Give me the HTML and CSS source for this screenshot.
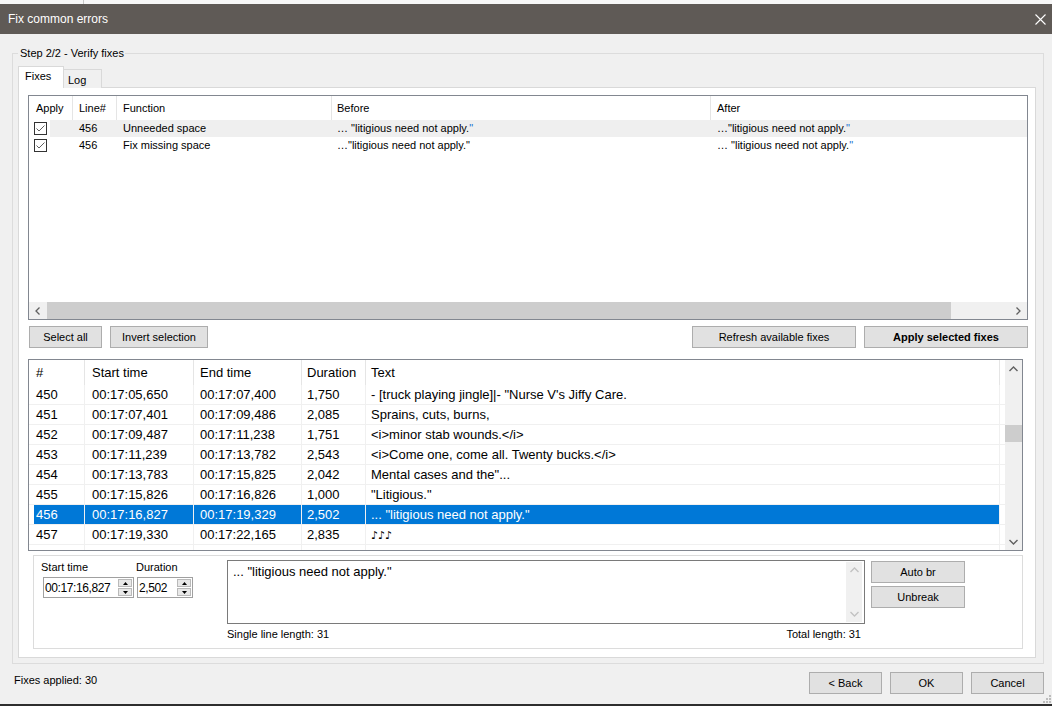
FILE: index.html
```html
<!DOCTYPE html>
<html lang="en">
<head>
    <meta charset="UTF-8">
    <title>Fix common errors</title>
    <link rel="stylesheet" href="styles.css">
</head>
<body>

    <div class="top-strip"><div class="top-strip-mark"></div></div>

    <div class="titlebar">
        <span>Fix common errors</span>
        <svg class="close" width="11" height="11" viewBox="0 0 11 11">
            <path d="M0.5 0.5L10.5 10.5M10.5 0.5L0.5 10.5" stroke="#fff" stroke-width="1.1" fill="none"/>
        </svg>
    </div>

    <div class="group">
        <div class="group-title">Step 2/2 - Verify fixes</div>

        <div class="tabs">
            <div class="tab active">Fixes</div>
            <div class="tab">Log</div>
        </div>

        <div class="tab-page">
            <!-- list of fixes found -->
            <div class="fix-list">
                <div class="fl-head">
                    <div class="c-apply">Apply</div>
                    <div class="c-line">Line#</div>
                    <div class="c-func">Function</div>
                    <div class="c-before">Before</div>
                    <div class="c-after">After</div>
                </div>
                <div class="fl-row hot">
                    <div class="c-apply">
                        <svg class="check" width="13" height="13" viewBox="0 0 13 13">
                            <rect x="0.5" y="0.5" width="12" height="12" fill="#fff" stroke="#333"/>
                            <path d="M2.5 6.5L5 9L10.5 3.5" stroke="#606060" stroke-width="1" fill="none"/>
                        </svg>
                    </div>
                    <div class="c-line">456</div>
                    <div class="c-func">Unneeded space</div>
                    <div class="c-before">… "litigious need not apply.<span class="diff">"</span></div>
                    <div class="c-after">…"litigious need not apply.<span class="diff">"</span></div>
                </div>
                <div class="fl-row">
                    <div class="c-apply">
                        <svg class="check" width="13" height="13" viewBox="0 0 13 13">
                            <rect x="0.5" y="0.5" width="12" height="12" fill="#fff" stroke="#333"/>
                            <path d="M2.5 6.5L5 9L10.5 3.5" stroke="#606060" stroke-width="1" fill="none"/>
                        </svg>
                    </div>
                    <div class="c-line">456</div>
                    <div class="c-func">Fix missing space</div>
                    <div class="c-before">…"litigious need not apply."</div>
                    <div class="c-after">… "litigious need not apply.<span class="diff">"</span></div>
                </div>
                <div class="fl-fill"></div>
                <div class="hscroll">
                    <div class="sb-btn">
                        <svg width="6" height="8" viewBox="0 0 6 8"><path d="M4.5 0.5L1 4L4.5 7.5" stroke="#606060" stroke-width="1.3" fill="none"/></svg>
                    </div>
                    <div class="h-thumb"></div>
                    <div class="sb-track"></div>
                    <div class="sb-btn">
                        <svg width="6" height="8" viewBox="0 0 6 8"><path d="M1.5 0.5L5 4L1.5 7.5" stroke="#606060" stroke-width="1.3" fill="none"/></svg>
                    </div>
                </div>
            </div>

            <div class="btn-row">
                <div class="btn w-select">Select all</div>
                <div class="btn w-invert">Invert selection</div>
                <div class="btn w-refresh">Refresh available fixes</div>
                <div class="btn w-apply">Apply selected fixes</div>
            </div>

            <!-- subtitle preview -->
            <div class="sub-grid">
                <div class="sg-main">
                    <div class="sg-head">
                        <div class="g-num">#</div>
                        <div class="g-start">Start time</div>
                        <div class="g-end">End time</div>
                        <div class="g-dur">Duration</div>
                        <div class="g-text">Text</div>
                        <div class="g-fill"></div>
                    </div>
                    <div class="sg-row">
                        <div class="g-num">450</div>
                        <div class="g-start">00:17:05,650</div>
                        <div class="g-end">00:17:07,400</div>
                        <div class="g-dur">1,750</div>
                        <div class="g-text">- [truck playing jingle]|- "Nurse V's Jiffy Care.</div>
                        <div class="g-fill"></div>
                    </div>
                    <div class="sg-row">
                        <div class="g-num">451</div>
                        <div class="g-start">00:17:07,401</div>
                        <div class="g-end">00:17:09,486</div>
                        <div class="g-dur">2,085</div>
                        <div class="g-text">Sprains, cuts, burns,</div>
                        <div class="g-fill"></div>
                    </div>
                    <div class="sg-row">
                        <div class="g-num">452</div>
                        <div class="g-start">00:17:09,487</div>
                        <div class="g-end">00:17:11,238</div>
                        <div class="g-dur">1,751</div>
                        <div class="g-text">&lt;i&gt;minor stab wounds.&lt;/i&gt;</div>
                        <div class="g-fill"></div>
                    </div>
                    <div class="sg-row">
                        <div class="g-num">453</div>
                        <div class="g-start">00:17:11,239</div>
                        <div class="g-end">00:17:13,782</div>
                        <div class="g-dur">2,543</div>
                        <div class="g-text">&lt;i&gt;Come one, come all. Twenty bucks.&lt;/i&gt;</div>
                        <div class="g-fill"></div>
                    </div>
                    <div class="sg-row">
                        <div class="g-num">454</div>
                        <div class="g-start">00:17:13,783</div>
                        <div class="g-end">00:17:15,825</div>
                        <div class="g-dur">2,042</div>
                        <div class="g-text">Mental cases and the"...</div>
                        <div class="g-fill"></div>
                    </div>
                    <div class="sg-row">
                        <div class="g-num">455</div>
                        <div class="g-start">00:17:15,826</div>
                        <div class="g-end">00:17:16,826</div>
                        <div class="g-dur">1,000</div>
                        <div class="g-text">"Litigious."</div>
                        <div class="g-fill"></div>
                    </div>
                    <div class="sg-row sel">
                        <div class="g-num">456</div>
                        <div class="g-start">00:17:16,827</div>
                        <div class="g-end">00:17:19,329</div>
                        <div class="g-dur">2,502</div>
                        <div class="g-text">... "litigious need not apply."</div>
                        <div class="g-fill"></div>
                    </div>
                    <div class="sg-row">
                        <div class="g-num">457</div>
                        <div class="g-start">00:17:19,330</div>
                        <div class="g-end">00:17:22,165</div>
                        <div class="g-dur">2,835</div>
                        <div class="g-text"><span class="notes">♪♪♪</span></div>
                        <div class="g-fill"></div>
                    </div>
                    <div class="sg-row">
                        <div class="g-num"></div>
                        <div class="g-start"></div>
                        <div class="g-end"></div>
                        <div class="g-dur"></div>
                        <div class="g-text"></div>
                        <div class="g-fill"></div>
                    </div>
                </div>
                <div class="vscroll">
                    <div class="sb-btn-v">
                        <svg width="9" height="6" viewBox="0 0 9 6"><path d="M0.5 5L4.5 1L8.5 5" stroke="#606060" stroke-width="1.4" fill="none"/></svg>
                    </div>
                    <div class="v-thumb"></div>
                    <div class="sb-track"></div>
                    <div class="sb-btn-v">
                        <svg width="9" height="6" viewBox="0 0 9 6"><path d="M0.5 1L4.5 5L8.5 1" stroke="#606060" stroke-width="1.4" fill="none"/></svg>
                    </div>
                </div>
            </div>

            <!-- edit area for the selected line -->
            <div class="edit-box">
                <div class="field f-start">
                    <div class="field-label">Start time</div>
                    <div class="spin-input w-time">
                        <span class="spin-value">00:17:16,827</span>
                        <div class="spinner">
                            <div class="spin-half"><svg width="5" height="3" viewBox="0 0 5 3"><path d="M0 3L2.5 0L5 3Z" fill="#000"/></svg></div>
                            <div class="spin-half"><svg width="5" height="3" viewBox="0 0 5 3"><path d="M0 0L2.5 3L5 0Z" fill="#000"/></svg></div>
                        </div>
                    </div>
                </div>
                <div class="field f-dur">
                    <div class="field-label">Duration</div>
                    <div class="spin-input w-dur">
                        <span class="spin-value">2,502</span>
                        <div class="spinner">
                            <div class="spin-half"><svg width="5" height="3" viewBox="0 0 5 3"><path d="M0 3L2.5 0L5 3Z" fill="#000"/></svg></div>
                            <div class="spin-half"><svg width="5" height="3" viewBox="0 0 5 3"><path d="M0 0L2.5 3L5 0Z" fill="#000"/></svg></div>
                        </div>
                    </div>
                </div>
                <div class="text-col">
                    <div class="memo">
                        <div class="memo-text">... "litigious need not apply."</div>
                        <div class="memo-scroll">
                            <svg width="9" height="6" viewBox="0 0 9 6"><path d="M0.5 5L4.5 1L8.5 5" stroke="#c2c2c2" stroke-width="1.3" fill="none"/></svg>
                            <svg width="9" height="6" viewBox="0 0 9 6"><path d="M0.5 1L4.5 5L8.5 1" stroke="#c2c2c2" stroke-width="1.3" fill="none"/></svg>
                        </div>
                    </div>
                    <div class="len-row">
                        <span>Single line length: 31</span>
                        <span>Total length: 31</span>
                    </div>
                </div>
                <div class="side-btns">
                    <div class="btn w-side">Auto br</div>
                    <div class="btn w-side">Unbreak</div>
                </div>
            </div>
        </div>
    </div>

    <div class="footer">
        <div class="footer-text">Fixes applied: 30</div>
        <div class="btn w-foot">&lt; Back</div>
        <div class="btn w-foot">OK</div>
        <div class="btn w-foot">Cancel</div>
    </div>

    <div class="spacer"></div>
    <div class="bottom-strip"></div>

    <svg class="grip" width="8" height="8" viewBox="0 0 8 8">
        <rect x="6" y="0" width="2" height="2" fill="#bcbcbc"/>
        <rect x="3" y="3" width="2" height="2" fill="#bcbcbc"/>
        <rect x="6" y="3" width="2" height="2" fill="#bcbcbc"/>
        <rect x="0" y="6" width="2" height="2" fill="#bcbcbc"/>
        <rect x="3" y="6" width="2" height="2" fill="#bcbcbc"/>
        <rect x="6" y="6" width="2" height="2" fill="#bcbcbc"/>
    </svg>

</body>
</html>
```

FILE: styles.css
```css
* {
    box-sizing: border-box;
}

body {
    margin: 0;
    width: 1052px;
    height: 706px;
    overflow: hidden;
    position: relative;
    display: flex;
    flex-direction: column;
    background-color: #f0f0f0;
    font-family: "Liberation Sans", Arial, sans-serif;
    font-size: 11px;
    color: #000;
}

.top-strip {
    height: 4px;
    flex: none;
    background-color: #f7f7f7;
}

.top-strip-mark {
    width: 84px;
    height: 4px;
    border-right: 1px solid #c8c8c8;
}

.titlebar {
    height: 30px;
    flex: none;
    display: flex;
    align-items: center;
    justify-content: space-between;
    padding: 0 6px 0 8px;
    background-color: #5f5a56;
    color: #fff;
    font-size: 12px;
}

/* group box */
.group {
    width: 1032px;
    height: 611px;
    flex: none;
    margin: 19px 0 0 12px;
    padding: 0 7px 0 5px;
    border: 1px solid #dcdcdc;
}

.group-title {
    display: table;
    margin-top: -8px;
    padding: 0 1px 0 2px;
    line-height: 15px;
    background-color: #f0f0f0;
}

.tabs {
    display: flex;
    align-items: flex-end;
    height: 22px;
    margin-top: 5px;
    margin-bottom: -1px;
    position: relative;
    z-index: 1;
}

.tab {
    width: 38px;
    height: 19px;
    padding-left: 4px;
    line-height: 20px;
    background-color: #f0f0f0;
    border: 1px solid #d9d9d9;
    border-left: none;
    border-bottom: none;
}

.tab.active {
    width: 46px;
    height: 22px;
    padding-left: 6px;
    line-height: 18px;
    background-color: #fff;
    border-left: 1px solid #d9d9d9;
}

.tab-page {
    height: 571px;
    padding: 7px 7px 0 9px;
    background-color: #fff;
    border: 1px solid #d9d9d9;
}

/* fixes list view */
.fix-list {
    width: 1000px;
    height: 225px;
    display: flex;
    flex-direction: column;
    background-color: #fff;
    border: 1px solid #828790;
}

.fl-head,
.fl-row {
    display: flex;
    flex: none;
    white-space: nowrap;
}

.fl-head {
    height: 24px;
    line-height: 24px;
}

.fl-head > div {
    border-right: 1px solid #e5e5e5;
}

.fl-head .c-after {
    border-right: none;
}

.fl-row {
    height: 17px;
    line-height: 17px;
}

.fl-row.hot {
    background: linear-gradient(to right, transparent 21px, #efefef 21px);
}

.c-apply { width: 44px; padding-left: 7px; }
.c-line { width: 44px; padding-left: 6px; }
.c-func { width: 215px; padding-left: 6px; }
.c-before { width: 379px; padding-left: 5px; }
.c-after { flex: 1; padding-left: 6px; }

.fl-row .c-apply {
    padding-left: 5px;
}

.check {
    display: block;
    margin-top: 2px;
}

.diff {
    color: #1a73d1;
}

.fl-fill {
    flex: 1;
}

.hscroll {
    height: 17px;
    flex: none;
    display: flex;
    background-color: #f0f0f0;
}

.sb-btn {
    width: 18px;
    display: flex;
    align-items: center;
    justify-content: center;
}

.h-thumb {
    width: 904px;
    background-color: #cdcdcd;
}

.sb-track {
    flex: 1;
}

/* buttons */
.btn {
    height: 22px;
    display: flex;
    align-items: center;
    justify-content: center;
    background-color: #e1e1e1;
    border: 1px solid #adadad;
    white-space: nowrap;
}

.btn-row {
    display: flex;
    height: 22px;
    margin-top: 6px;
    padding-left: 1px;
}

.w-select { width: 73px; }
.w-invert { width: 98px; margin-left: 8px; }
.w-refresh { width: 164px; margin-left: auto; }
.w-apply { width: 164px; margin-left: 8px; font-weight: bold; }

/* subtitle grid */
.sub-grid {
    width: 995px;
    height: 192px;
    margin-top: 11px;
    display: flex;
    background-color: #fff;
    border: 1px solid #828790;
    font-size: 13px;
}

.sg-main {
    flex: 1;
    overflow: hidden;
}

.sg-head,
.sg-row {
    display: flex;
    white-space: nowrap;
}

.sg-head {
    height: 25px;
    line-height: 25px;
}

.sg-head > div {
    border-right: 1px solid #e5e5e5;
}

.sg-row {
    height: 20px;
    line-height: 20px;
    border-bottom: 1px solid #f0f0f0;
}

.sg-row > div {
    border-right: 1px solid #f0f0f0;
}

.g-num { width: 56px; padding-left: 7px; }
.g-start { width: 109px; padding-left: 7px; }
.g-end { width: 108px; padding-left: 6px; }
.g-dur { width: 64px; padding-left: 5px; }
.g-text { width: 634px; padding-left: 5px; overflow: hidden; }

.sg-head .g-fill,
.sg-row .g-fill {
    flex: 1;
    border-right: none;
}

.sg-row.sel > div {
    background-color: #0078d7;
    color: #fff;
}

.sg-row.sel .g-num {
    background: linear-gradient(to right, #fff 5px, #0078d7 5px);
}

.sg-row.sel .g-fill {
    background-color: #fff;
}

.notes {
    font-family: "DejaVu Sans", sans-serif;
    font-size: 11px;
}

.vscroll {
    width: 17px;
    display: flex;
    flex-direction: column;
    background-color: #f0f0f0;
}

.sb-btn-v {
    height: 17px;
    display: flex;
    align-items: center;
    justify-content: center;
}

.v-thumb {
    height: 17px;
    margin-top: 48px;
    background-color: #cdcdcd;
}

/* edit box */
.edit-box {
    width: 990px;
    height: 94px;
    margin: 4px 0 0 5px;
    padding: 4px 0 0 7px;
    display: flex;
    background-color: #fff;
    border: 1px solid #dcdcdc;
}

.field-label {
    line-height: 14px;
}

.f-start { width: 93px; }
.f-dur { width: 57px; margin-left: 2px; }

.spin-input {
    height: 21px;
    margin-top: 3px;
    display: flex;
    align-items: center;
    justify-content: space-between;
    border: 1px solid #a0a0a0;
    background-color: #fff;
    padding: 0 1px 0 1px;
}

.w-time { width: 91px; margin-left: 2px; }
.w-dur { width: 56px; margin-left: 1px; }

.spin-value {
    font-size: 12px;
    letter-spacing: -0.4px;
}

.spinner {
    width: 14px;
    height: 17px;
    display: flex;
    flex-direction: column;
    gap: 1px;
}

.spin-half {
    flex: 1;
    display: flex;
    align-items: center;
    justify-content: center;
    background-color: #e8e8e8;
    border: 1px solid #b9b9b9;
}

.spin-half svg {
    display: block;
}

.text-col {
    width: 638px;
    margin-left: 34px;
}

.memo {
    height: 64px;
    display: flex;
    border: 1px solid #7a7a7a;
}

.memo-text {
    flex: 1;
    padding: 3px 5px;
    font-size: 13px;
}

.memo-scroll {
    width: 16px;
    margin: 1px 2px 1px 0;
    display: flex;
    flex-direction: column;
    justify-content: space-between;
    align-items: center;
    padding: 5px 0;
    background-color: #f0f0f0;
}

.len-row {
    display: flex;
    justify-content: space-between;
    margin-top: 3px;
    padding-right: 4px;
    line-height: 14px;
}

.side-btns {
    display: flex;
    flex-direction: column;
    gap: 3px;
    margin: 1px 0 0 6px;
}

.w-side { width: 94px; }

/* footer */
.footer {
    display: flex;
    align-items: flex-start;
    height: 22px;
    flex: none;
    margin-top: 8px;
    padding: 0 8px 0 14px;
}

.footer-text {
    flex: 1;
    line-height: 16px;
}

.w-foot {
    width: 73px;
    margin-left: 8px;
}

.spacer {
    flex: 1;
}

.bottom-strip {
    height: 2px;
    flex: none;
    background-color: #2e2e2e;
}

.grip {
    position: absolute;
    right: 1px;
    bottom: 3px;
}
```
